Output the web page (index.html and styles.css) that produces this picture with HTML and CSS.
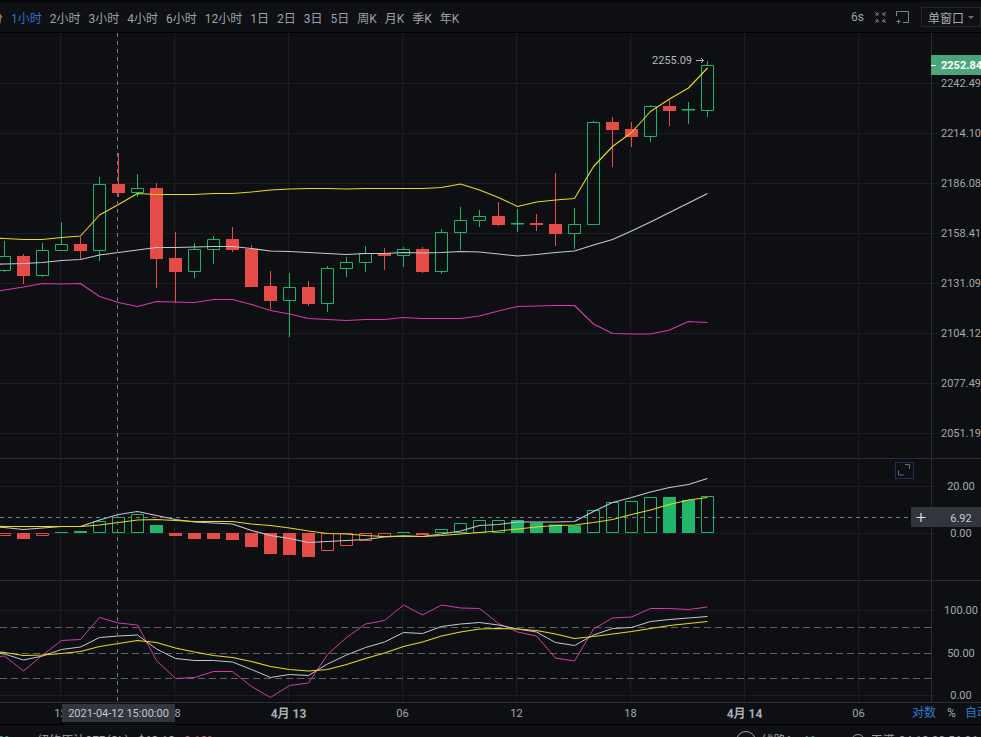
FILE: index.html
```html
<!DOCTYPE html>
<html lang="zh">
<head>
<meta charset="utf-8">
<title>K线图</title>
<link rel="stylesheet" href="styles.css">
</head>
<body>
<div class="app">
  <header class="topbar">
    <nav class="periods">
      <span>分</span><span class="active">1小时</span><span>2小时</span><span>3小时</span><span>4小时</span><span>6小时</span><span>12小时</span><span>1日</span><span>2日</span><span>3日</span><span>5日</span><span>周K</span><span>月K</span><span>季K</span><span>年K</span>
    </nav>
    <div class="tools">
      <span class="refresh">6s</span>
      <svg class="tool-icon" viewBox="0 0 13 13"><path d="M1 1l3 3M4 1.5V4H1.5M12 1L9 4M9 1.5V4h2.5M1 12l3-3M4 11.500V9H1.500M12 12L9 9M9 11.500V9h2.500"/></svg>
      <svg class="tool-icon" viewBox="0 0 13 13"><path d="M3.500.5h9v11H7M.5 5V.5h3M.5 10.500h4M2.500 8.500v4"/></svg>
      <div class="window-select"><span>单窗口</span><i class="caret"></i></div>
    </div>
  </header>

  <svg class="chart" viewBox="0 33 981 691" width="981" height="691">
    <path class="grid" d="M60.5 33V702M174.500 33V702M288.500 33V702M402.500 33V702M516.500 33V702M630.500 33V702M744.500 33V702M858.500 33V702"/>
    <path class="grid" d="M0 83.500H937M0 133.500H937M0 183.500H937M0 233.500H937M0 283.500H937M0 333.500H937M0 383.500H937M0 433.500H937M0 486.500H937M0 533.500H937M0 610.500H937M0 695.500H937"/>
    <path class="rule" d="M931.500 33V702M0 458.500H981M0 580.500H981M0 702.500H981"/>
    <path class="level" d="M0 627.500H931M0 653.500H931M0 678.500H931"/>

    <!-- candles -->
    <path class="up-line" d="M-1.500 256.500h12v14h-12zM4.500 241v15.500M4.500 270.500v1.500
      M36.500 250.500h12v25h-12zM42.500 243v7.500M42.500 275.500v1.500
      M55.500 244.500h12v6h-12zM61.500 222v22.500
      M93.500 184.500h12v66h-12zM99.500 177v7.500M99.500 250.500v10.500
      M131.500 188.500h12v4h-12zM137.500 174v14.500M137.500 192.500v4.500
      M188.500 249.500h12v22h-12zM194.500 243v6.500M194.500 271.500v6.500
      M207.500 239.500h12v10h-12zM213.500 236v3.500M213.500 249.500v14.500
      M283.500 287.500h12v13h-12zM289.500 273v14.500M289.500 300.500v36.500
      M321.500 268.500h12v35h-12zM327.500 266v2.500M327.500 303.500v8.500
      M340.500 262.500h12v6h-12zM346.500 257v5.500M346.500 268.500v8.500
      M359.500 253.500h12v9h-12zM365.500 246v7.500M365.500 262.500v9.500
      M397.500 249.500h12v6h-12zM403.500 247v2.500M403.500 255.500v11.500
      M435.500 232.500h12v39h-12zM441.500 229v3.500M441.500 271.500v2.500
      M454.500 220.500h12v12h-12zM460.500 207v13.500M460.500 232.500v17.500
      M473.500 216.500h12v4h-12zM479.500 210v6.500M479.500 220.500v6.500
      M568.500 224.500h12v9h-12zM574.500 208v16.500M574.500 233.500v15.500
      M587.500 122.500h12v102h-12zM593.500 121v1.500
      M644.500 106.500h12v30h-12zM650.500 105v1.500M650.500 136.500v5.500
      M701.500 65.500h12v45h-12zM707.500 61v4.500M707.500 110.500v6.500
      M517.500 209v23M688.500 102v22"/>
    <path class="up-fill" d="M511 223h13v1.500h-13zM682 109h13v1.500h-13z"/>
    <path class="down-line" d="M23.500 254v30M80.500 237v22M118.500 153v44M156.500 183v105M175.500 232v71M232.500 227v25M251.500 245v42M270.500 271v38M308.500 281v25M384.500 248v22M422.500 247v26M498.500 202v24M536.500 214v17M555.500 173v73M612.500 117v50M631.500 122v25M669.500 100v26"/>
    <path class="down-fill" d="M17 256h13v20h-13zM74 244h13v7h-13zM112 184h13v9h-13zM150 188h13v71h-13zM169 258h13v14h-13zM226 239h13v11h-13zM245 249h13v38h-13zM264 286h13v15h-13zM302 287h13v17h-13zM378 253h13v3h-13zM416 249h13v23h-13zM492 216h13v9h-13zM530 223h13v2h-13zM549 224h13v10h-13zM606 122h13v8h-13zM625 129h13v8h-13zM663 106h13v5h-13z"/>

    <!-- bollinger -->
    <polyline class="ln-pink" points="-14.500 293 4.500 290 23.500 287 42.500 283.500 61.500 284 80.500 283.500 99.500 296.500 118.500 302.500 137.500 306.500 156.500 301.500 175.500 302 194.500 302.500 213.500 299.500 232.500 299.500 251.500 304.500 270.500 310.500 289.500 314 308.500 318.500 327.500 319.500 346.500 320.500 365.500 319.500 384.500 319.500 403.500 317.500 422.500 318.500 441.500 318.500 460.500 318.500 479.500 316 498.500 311 517.500 306.500 536.500 306 555.500 305.500 574.500 305.500 593.500 324 612.500 333.500 631.500 334 650.500 334 669.500 330 688.500 321.500 707.500 322.500"/>
    <polyline class="ln-white" points="-14.500 264.500 4.500 264 23.500 263.500 42.500 262.500 61.500 260.500 80.500 259.500 99.500 255 118.500 252.500 137.500 250 156.500 247.500 175.500 247.500 194.500 247 213.500 246.500 232.500 246.500 251.500 248.500 270.500 251 289.500 251.500 308.500 252.500 327.500 253.500 346.500 254.500 365.500 253.500 384.500 253.500 403.500 252.500 422.500 253 441.500 252.500 460.500 251.500 479.500 252 498.500 254 517.500 256 536.500 254.500 555.500 252.500 574.500 251 593.500 245 612.500 239.500 631.500 231 650.500 222 669.500 212.500 688.500 203 707.500 193.500"/>
    <polyline class="ln-yellow" points="-14.500 238 4.500 238.500 23.500 239.500 42.500 239.500 61.500 237.500 80.500 236 99.500 215 118.500 204.500 137.500 193.500 156.500 194.500 175.500 194.500 194.500 194.500 213.500 193.500 232.500 193.500 251.500 192 270.500 190 289.500 189 308.500 188.500 327.500 188.500 346.500 189 365.500 188.500 384.500 188.500 403.500 188.500 422.500 188.500 441.500 187.500 460.500 184 479.500 190 498.500 197.500 517.500 206.500 536.500 202 555.500 200 574.500 198.500 593.500 166.500 612.500 146.500 631.500 132.500 650.500 111.500 669.500 99 688.500 88 707.500 68"/>

    <text class="high" x="652" y="64">2255.09</text>
    <path class="high-arrow" d="M696 60.500h7.500M701 58l2.500 2.500-2.500 2.500"/>

    <!-- macd -->
    <path class="down-line" d="M-1.500 533.500h12v2h-12zM36.500 533.500h12v2h-12zM321.500 533.500h12v17h-12zM340.500 533.500h12v12h-12zM359.500 533.500h12v7h-12zM378.500 533.500h12v3h-12z"/>
    <path class="down-fill" d="M17 533h13v6h-13zM169 533h13v3h-13zM188 533h13v6h-13zM207 533h13v6h-13zM226 533h13v7h-13zM245 533h13v14h-13zM264 533h13v21h-13zM283 533h13v22h-13zM302 533h13v24h-13zM416 533h13v2h-13z"/>
    <path class="up-line" d="M93.500 521.500h12v11h-12zM112.500 517.500h12v15h-12zM131.500 514.500h12v18h-12zM435.500 529.500h12v3h-12zM454.500 523.500h12v9h-12zM473.500 520.500h12v12h-12zM492.500 520.500h12v12h-12zM587.500 510.500h12v22h-12zM606.500 502.500h12v30h-12zM625.500 501.500h12v31h-12zM644.500 497.500h12v35h-12zM701.500 496.500h12v36h-12z"/>
    <path class="up-fill" d="M55 532h13v1h-13zM74 531h13v2h-13zM150 525h13v8h-13zM397 532h13v1h-13zM511 520h13v13h-13zM530 522.500h13v10.500h-13zM549 524.500h13v8.500h-13zM568 525.500h13v7.500h-13zM663 497h13v36h-13zM682 500h13v33h-13z"/>
    <polyline class="ln-white" points="-14.500 526 4.500 527.500 23.500 529.500 42.500 528 61.500 526.500 80.500 526.500 99.500 520 118.500 514.500 137.500 511.500 156.500 515.500 175.500 519.500 194.500 522 213.500 523 232.500 524 251.500 530.500 270.500 535.500 289.500 538.500 308.500 542.500 327.500 541.500 346.500 540.500 365.500 539.500 384.500 537 403.500 536 422.500 536.500 441.500 534 460.500 531 479.500 525.500 498.500 524.500 517.500 522 536.500 522 555.500 522 574.500 521.500 593.500 511.500 612.500 502.500 631.500 497.500 650.500 492 669.500 487.500 688.500 484.500 707.500 478.500"/>
    <polyline class="ln-yellow" points="-14.500 526 4.500 526.500 23.500 526.500 42.500 526.500 61.500 526.500 80.500 526.500 99.500 525 118.500 522.500 137.500 520 156.500 519.500 175.500 520.500 194.500 521.500 213.500 521.500 232.500 521.500 251.500 524 270.500 525.500 289.500 528 308.500 531 327.500 533.500 346.500 534 365.500 535.500 384.500 536.500 403.500 536 422.500 536.500 441.500 535.500 460.500 534 479.500 532.500 498.500 531 517.500 529 536.500 527 555.500 525.500 574.500 525 593.500 522.500 612.500 519.500 631.500 514.500 650.500 510 669.500 504.500 688.500 500 707.500 497.500"/>

    <!-- kdj -->
    <polyline class="ln-pink thin" points="-14.500 658 4.500 656 23.500 671 42.500 655 61.500 640.500 80.500 639.500 99.500 617.500 118.500 623 137.500 625 156.500 660.500 175.500 678.500 194.500 677.500 213.500 671.500 232.500 671.500 251.500 686.500 270.500 697.500 289.500 685.500 308.500 683 327.500 654.500 346.500 637.500 365.500 624 384.500 620.500 403.500 605 422.500 615 441.500 605 460.500 608 479.500 608.500 498.500 623.500 517.500 632 536.500 636 555.500 658 574.500 661 593.500 629 612.500 618 631.500 617 650.500 608.500 669.500 608.500 688.500 609.500 707.500 607"/>
    <polyline class="ln-white thin" points="-14.500 652 4.500 654 23.500 660 42.500 656 61.500 649.500 80.500 647 99.500 637.500 118.500 636 137.500 635 156.500 649 175.500 658.500 194.500 660.500 213.500 660.500 232.500 662 251.500 669.500 270.500 677.500 289.500 674.500 308.500 675.500 327.500 664 346.500 655 365.500 647.500 384.500 642 403.500 632.500 422.500 633.500 441.500 626.500 460.500 624 479.500 622.500 498.500 625 517.500 629 536.500 632 555.500 642.500 574.500 645.500 593.500 635 612.500 628.500 631.500 627.500 650.500 621.500 669.500 619.500 688.500 618 707.500 616.500"/>
    <polyline class="ln-yellow" points="-14.500 651 4.500 652.500 23.500 655.500 42.500 655 61.500 653.500 80.500 651.500 99.500 646.500 118.500 643.500 137.500 640.500 156.500 642.500 175.500 648 194.500 652 213.500 655.500 232.500 657.500 251.500 661.500 270.500 666.500 289.500 669.500 308.500 671 327.500 669.500 346.500 664.500 365.500 658.500 384.500 653 403.500 646.500 422.500 642 441.500 636 460.500 632 479.500 629 498.500 628.500 517.500 629 536.500 630.500 555.500 634 574.500 638.500 593.500 636.500 612.500 634 631.500 631.500 650.500 628.500 669.500 625.500 688.500 623.500 707.500 621.500"/>

    <!-- crosshair -->
    <path class="cross" d="M117.500 33V702M0 517.500H911"/>

    <!-- expand button -->
    <rect class="expand-box" x="895.500" y="462.500" width="18" height="16"/>
    <path class="expand-mark" d="M905 464.500h4.500V469M898.500 470.500v4.500h5"/>

    <!-- price axis -->
    <g class="axis">
      <text x="941" y="87">2242.49</text><text x="941" y="137">2214.10</text><text x="941" y="187">2186.08</text><text x="941" y="237">2158.41</text><text x="941" y="287">2131.09</text><text x="941" y="337">2104.12</text><text x="941" y="387">2077.49</text><text x="941" y="437">2051.19</text>
    </g>
    <rect class="price-tag" x="931" y="55" width="50" height="20"/>
    <path class="price-tick" d="M931 65.500h5"/>
    <text class="price-now" x="941" y="69">2252.84</text>
    <g class="axis center">
      <text x="961" y="490">20.00</text><text x="961" y="537">0.00</text><text x="961" y="614">100.00</text><text x="961" y="657">50.00</text><text x="961" y="699">0.00</text>
    </g>
    <rect class="cross-tag" x="911" y="507" width="70" height="20"/>
    <path class="cross-plus" d="M916.500 517.500h9M921 513v9"/>
    <text class="cross-value" x="961" y="521.500">6.92</text>

    <!-- time axis -->
    <g class="axis center">
      <text x="60.500" y="717">12</text><text x="174.500" y="717">18</text><text x="402.500" y="717">06</text><text x="516.500" y="717">12</text><text x="630.500" y="717">18</text><text x="858.500" y="717">06</text>
      <text class="date" x="288.500" y="717.500">4月 13</text><text class="date" x="744.500" y="717.500">4月 14</text>
    </g>
    <rect class="cross-tag" x="62" y="704" width="113" height="18"/>
    <text class="cross-value" x="118.500" y="717">2021-04-12 15:00:00</text>
    <g class="axis">
      <text class="link" x="912" y="717">对数</text><text class="unit" x="947" y="717">%</text><text class="link" x="965" y="717">自动</text>
    </g>
  </svg>

  <footer class="statusbar">
    <div class="market">
      <span class="gain pct">20%</span>
      <span class="name">纽约原油2EP(CL)</span>
      <span class="name">$63.13</span>
      <span class="loss">0.18%</span>
    </div>
    <div class="status">
      <svg class="status-icon" viewBox="0 0 20 20"><circle cx="10" cy="10" r="9.500"/><path d="M4 9q6-4 12 0"/></svg>
      <span class="name route">线路1</span>
      <span class="gain">46</span>
      <svg class="clock-icon" viewBox="0 0 14 14"><circle cx="7" cy="7" r="6.500"/><path d="M7 3v4"/></svg>
      <span class="name">天满</span>
      <span class="time">04:13 09:56:06</span>
    </div>
  </footer>
</div>
</body>
</html>
```

FILE: styles.css
```css
* { box-sizing: border-box; }

html, body {
  margin: 0;
  height: 100%;
  overflow: hidden;
  background: #0d0f12;
}

body, text {
  font-family: Roboto, "Noto Sans CJK SC", sans-serif;
}

.app {
  display: flex;
  flex-direction: column;
  width: 981px;
  height: 737px;
  overflow: hidden;
}

/* top bar */
.topbar {
  flex: 0 0 33px;
  display: flex;
  align-items: center;
  justify-content: space-between;
  background: #0f1013;
  border-top: 2px solid #08090a;
  border-bottom: 1px solid #000;
  font-size: 12px;
  color: #9ca1ab;
}

.periods {
  display: flex;
  gap: 8px;
  margin-left: -9px;
}

.periods .active { color: #2a72c5; }

.tools {
  display: flex;
  align-items: center;
}

.refresh { margin-right: 10px; }

.tool-icon {
  width: 13px;
  height: 13px;
  margin-right: 9px;
  fill: none;
  stroke: #7e838c;
  stroke-width: 1;
}

.window-select {
  display: flex;
  align-items: center;
  width: 60px;
  height: 20px;
  margin-left: 3px;
  padding-left: 6px;
  border: 1px solid #24272c;
  font-size: 12px;
  color: #a4a8b0;
}

.caret {
  width: 0;
  height: 0;
  margin-left: 4px;
  border-left: 3px solid transparent;
  border-right: 3px solid transparent;
  border-top: 3px solid #6a6f78;
}

/* chart */
.chart {
  flex: 0 0 691px;
  display: block;
  background: #0d0f12;
}

.grid { fill: none; stroke: #1b1d21; stroke-width: 1; }
.rule { fill: none; stroke: #2b2d32; stroke-width: 1; }
.level { fill: none; stroke: #5f6368; stroke-width: 1; stroke-dasharray: 7 4; }
.cross { fill: none; stroke: #757a84; stroke-width: 1; stroke-dasharray: 4 4; }

.up-line { fill: none; stroke: #19b666; stroke-width: 1; }
.up-fill { fill: #1fb86a; }
.down-line { fill: none; stroke: #e64b47; stroke-width: 1; }
.down-fill { fill: #e54b47; }

.ln-yellow, .ln-white, .ln-pink { fill: none; stroke-width: 1.1; stroke-linejoin: round; }
.ln-yellow { stroke: #e9d91d; }
.ln-white { stroke: #c6c8d2; }
.ln-pink { stroke: #d63ba8; }
.thin { stroke-width: 1; }

.high { font-size: 11px; fill: #b4b6bb; }
.high-arrow { fill: none; stroke: #b4b6bb; stroke-width: 1; }

.expand-box { fill: none; stroke: #272c52; stroke-width: 1; }
.expand-mark { fill: none; stroke: #6c7079; stroke-width: 1; }

.axis text { font-size: 11px; fill: #a3a8b2; }
.axis.center text { text-anchor: middle; }
.axis .date { font-size: 12px; font-weight: 700; fill: #a9adb5; }
.axis .link { font-size: 12px; fill: #2f7ad1; }
.axis .unit { font-size: 12px; }

.price-tag { fill: #4aa67a; }
.price-tick { fill: none; stroke: #fff; stroke-width: 1; }
.price-now { font-size: 11px; font-weight: 700; fill: #fff; }

.cross-tag { fill: #31353d; }
.cross-plus { fill: none; stroke: #e6e7ea; stroke-width: 1.2; }
.cross-value { font-size: 11px; fill: #c6c9cf; text-anchor: middle; }

/* status bar */
.statusbar {
  flex: 1 0 auto;
  display: flex;
  justify-content: space-between;
  padding-top: 8px;
  background: #0f1013;
  border-top: 1px solid #000;
  font-size: 12px;
  line-height: 16px;
  white-space: nowrap;
}

.market, .status {
  display: flex;
  align-items: flex-start;
}

.market { gap: 9px; }

.pct { margin-left: -9px; margin-right: 15px; }

.status { margin-right: 3px; }

.name { color: #9ca1ab; }
.gain { color: #1fb86a; }
.loss { color: #e64b47; }
.time { color: #8d9bb0; margin-left: 4px; }

.route { margin-left: 6px; }
.status .gain { margin-left: 10px; margin-right: 35px; }

.status-icon {
  width: 20px;
  height: 20px;
  margin-top: -2px;
  fill: none;
  stroke: #9ca1ab;
}

.clock-icon {
  width: 14px;
  height: 14px;
  margin-top: 1px;
  margin-right: 6px;
  fill: none;
  stroke: #9ca1ab;
}
```
